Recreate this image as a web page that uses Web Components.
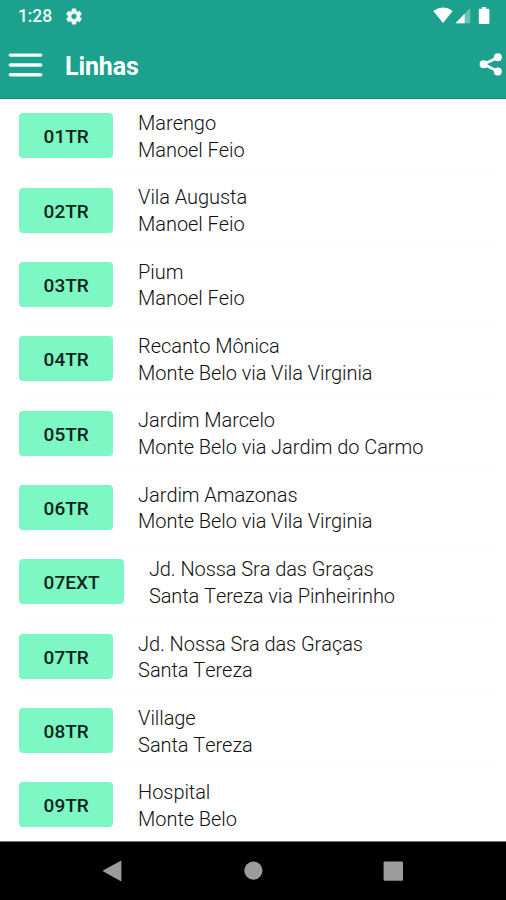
<!DOCTYPE html>
<html lang="pt-BR">
<head>
<meta charset="utf-8">
<title>Linhas</title>
<style>
html,body{margin:0;height:100%;overflow:hidden;background:#fff}
body{font-family:Roboto,"Liberation Sans",sans-serif}
</style>
</head>
<body>
<linhas-app></linhas-app>
<script>
class BaseElement extends HTMLElement {
  connectedCallback() {
    if (this.shadowRoot) return;
    this.attachShadow({ mode: 'open' }).innerHTML = this.render();
  }
}

customElements.define('status-bar', class extends BaseElement {
  render() {
    return `<style>
      :host{display:flex;align-items:center;height:32px;padding:0 15px 0 18px;box-sizing:border-box;color:#ecfaf6}
      .time{font-size:17.5px;font-weight:500;line-height:32px;width:48px;white-space:nowrap;letter-spacing:-.1px}
      .right{margin-left:auto;display:flex;align-items:center}
      svg{display:block}
    </style>
    <span class="time">1:28</span>
    <svg width="16" height="17" viewBox="2 2 20 20" fill="#effbf8" stroke="#effbf8" stroke-width=".7"><path d="M19.14 12.94c.04-.3.06-.61.06-.94s-.02-.64-.07-.94l2.03-1.58c.18-.14.23-.41.12-.61l-1.92-3.32c-.12-.22-.37-.29-.59-.22l-2.39.96c-.5-.38-1.03-.7-1.62-.94l-.36-2.54c-.04-.24-.24-.41-.48-.41h-3.84c-.24 0-.43.17-.47.41l-.36 2.54c-.59.24-1.13.57-1.62.94l-2.39-.96c-.22-.08-.47 0-.59.22L2.74 8.87c-.12.21-.08.47.12.61l2.03 1.58c-.05.3-.09.63-.09.94s.02.64.07.94l-2.03 1.58c-.18.14-.23.41-.12.61l1.92 3.32c.12.22.37.29.59.22l2.39-.96c.5.38 1.03.7 1.62.94l.36 2.54c.05.24.24.41.48.41h3.84c.24 0 .44-.17.47-.41l.36-2.54c.59-.24 1.13-.56 1.62-.94l2.39.96c.22.08.47 0 .59-.22l1.92-3.32c.12-.22.07-.47-.12-.61zM12 15.6c-1.98 0-3.6-1.62-3.6-3.6s1.62-3.6 3.6-3.6 3.6 1.62 3.6 3.6-1.62 3.6-3.6 3.6z"/></svg>
    <div class="right">
      <svg width="58" height="18" viewBox="433 6.5 58 18">
        <path d="M433.3 10.4Q443 3.6 452.7 10.4L443 22.4Z" fill="#fff"/>
        <path d="M470.2 7.5V22.7H455.5Z" fill="#fff" opacity=".35"/>
        <path d="M464.6 13.3V22.7H455.5Z" fill="#fff"/>
        <path d="M482 6.5h4.2v1.8h2.4q.8 0 .8.8v13.5q0 .8-.8.8h-9q-.8 0-.8-.8V9q0-.8.8-.8H482Z" fill="#fff"/>
      </svg>
    </div>`;
  }
});

customElements.define('app-bar', class extends BaseElement {
  render() {
    return `<style>
      :host{display:flex;align-items:center;height:67px;padding:0 3px 0 8px;box-sizing:border-box;color:#fff;border-bottom:1px solid #168d7a}
      h1{margin:3px 0 0 22px;font-size:25px;font-weight:700;line-height:36px;letter-spacing:-.1px;white-space:nowrap}
      .share{margin-left:auto;margin-bottom:2px}
      svg{display:block}
    </style>
    <svg width="35" height="26" viewBox="0 0 35 26" stroke="#f4fffc" stroke-width="3.4" stroke-linecap="round"><path d="M2.3 3.1H32.7M2.3 13H32.7M2.3 22.7H32.7"/></svg>
    <h1><slot></slot></h1>
    <svg class="share" width="24" height="24" viewBox="479 52 24 24"><path d="M498 57.4L483.5 64.2L498 71.2" fill="none" stroke="#fff" stroke-width="2.8"/><g fill="#fff"><circle cx="497.8" cy="57.3" r="4"/><circle cx="483.6" cy="64.2" r="4"/><circle cx="497.8" cy="71.4" r="4"/></g></svg>`;
  }
});

customElements.define('line-badge', class extends BaseElement {
  render() {
    return `<style>
      :host{display:block;height:45px;box-sizing:border-box;padding:0 24.2px 0 24.6px;border-radius:4px;background:#7df7c3;color:#10241d;
        font-size:19px;font-weight:500;line-height:47px;letter-spacing:0;white-space:nowrap;flex:none}
    </style><slot></slot>`;
  }
});

customElements.define('line-row', class extends BaseElement {
  render() {
    return `<style>
      :host{display:flex;align-items:center;height:74.37px;box-sizing:border-box;margin-left:19px;margin-right:10px;border-bottom:1px solid #fcfcfc}
      .names{margin:2px 0 0 25.2px;font-size:20px;font-weight:300;line-height:26.7px;letter-spacing:-.07px;font-kerning:none;color:#111;white-space:nowrap}
      .names div{height:26.7px}
    </style>
    <line-badge>${this.getAttribute('code')}</line-badge>
    <div class="names"><div><slot name="from"></slot></div><div><slot name="to"></slot></div></div>`;
  }
});

customElements.define('nav-bar', class extends BaseElement {
  render() {
    return `<style>
      :host{display:block;height:58px;background:#000;border-top:1px solid #777}
      svg{display:block}
    </style>
    <svg width="506" height="58" viewBox="0 842 506 58" fill="#9c9c9c"><path d="M103.4 870.2L120.4 861Q121.4 860.5 121.4 861.6V880.4Q121.4 881.5 120.4 881L103.4 871.4Q102.6 870.8 103.4 870.2Z"/><circle cx="253.4" cy="870.6" r="9.1"/><rect x="383.6" y="861.5" width="19.4" height="19.2" rx="1"/></svg>`;
  }
});

customElements.define('linhas-app', class extends BaseElement {
  render() {
    const lines = [
      ['01TR', 'Marengo', 'Manoel Feio'],
      ['02TR', 'Vila Augusta', 'Manoel Feio'],
      ['03TR', 'Pium', 'Manoel Feio'],
      ['04TR', 'Recanto Mônica', 'Monte Belo via Vila Virginia'],
      ['05TR', 'Jardim Marcelo', 'Monte Belo via Jardim do Carmo'],
      ['06TR', 'Jardim Amazonas', 'Monte Belo via Vila Virginia'],
      ['07EXT', 'Jd. Nossa Sra das Graças', 'Santa Tereza via Pinheirinho'],
      ['07TR', 'Jd. Nossa Sra das Graças', 'Santa Tereza'],
      ['08TR', 'Village', 'Santa Tereza'],
      ['09TR', 'Hospital', 'Monte Belo']
    ];
    return `<style>
      :host{display:flex;flex-direction:column;width:506px;height:900px;overflow:hidden;background:#fff}
      header{flex:none;height:99px;background:#1ba18e}
      main{flex:1;min-height:0;overflow:hidden}
      nav-bar{flex:none}
    </style>
    <header><status-bar></status-bar><app-bar>Linhas</app-bar></header>
    <main>${lines.map(([c, a, b]) => `<line-row code="${c}"><span slot="from">${a}</span><span slot="to">${b}</span></line-row>`).join('')}</main>
    <nav-bar></nav-bar>`;
  }
});
</script>
</body>
</html>
